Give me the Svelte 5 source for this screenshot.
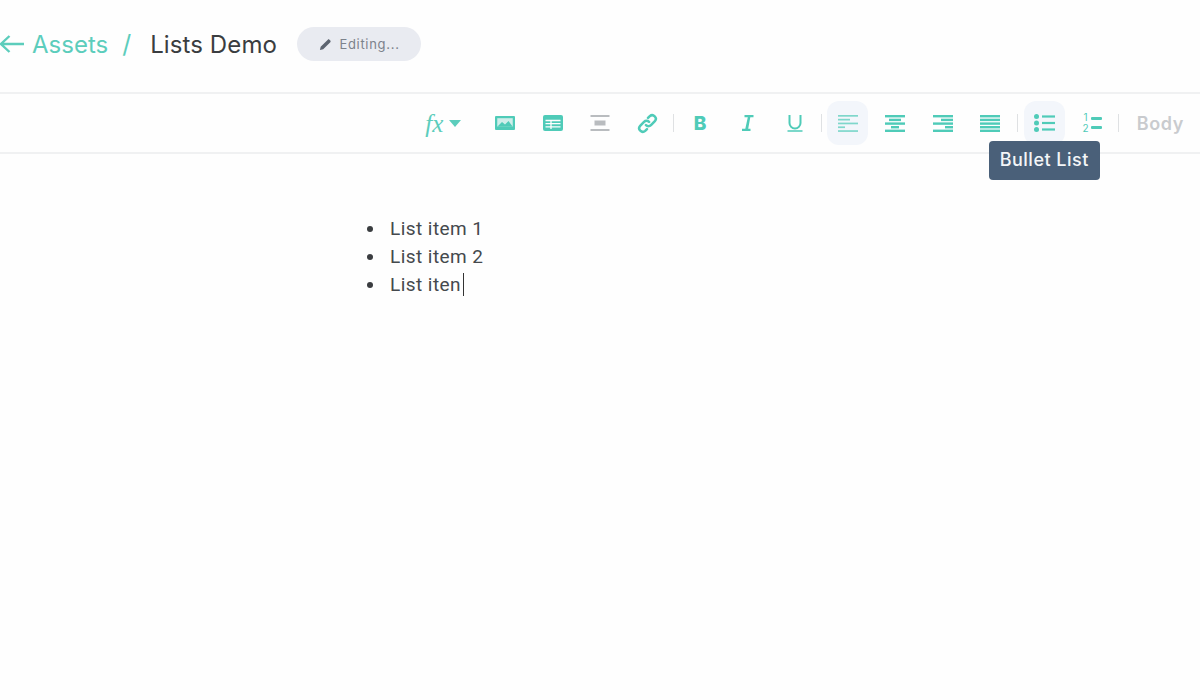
<script>
	const items = ['List item 1', 'List item 2'];
</script>

<div class="page">
	<header class="top">
		<a class="back" href="#assets">
			<svg class="arrow" viewBox="0 0 26 20" width="26" height="20" aria-hidden="true">
				<path d="M25 10H2M10.500 2 2 10l8.500 8" fill="none" stroke="currentColor" stroke-width="2.400" />
			</svg>
			Assets
		</a>
		<span class="slash">/</span>
		<h1>Lists Demo</h1>
		<div class="status">
			<svg viewBox="0 0 14 14" width="13" height="13" aria-hidden="true">
				<path d="M1 13l.8-3.500L9.500 1.800c.5-.5 1.200-.5 1.700 0l1 1c.5.5.5 1.200 0 1.700L4.500 12.200z" fill="#5d6470" />
			</svg>
			<span class="status-label">Editing...</span>
		</div>
	</header>

	<div class="toolbar">
		<button class="tool fx">
			<i>fx</i>
			<svg viewBox="0 0 12 7" width="12" height="7" aria-hidden="true"><path d="M0 0h12L6 7z" fill="currentColor" /></svg>
		</button>

		<button class="tool" aria-label="Image">
			<svg viewBox="0 0 20 14" width="20" height="14">
				<rect width="20" height="14" rx="1" fill="currentColor" />
				<rect width="15.500" height="8.500" x="2.250" y="2.200" fill="#cfeeea" />
				<path d="M2.250 10.700 7 6l3 2.500L13.500 5l4.250 5.700z" fill="currentColor" />
			</svg>
		</button>
		<button class="tool" aria-label="Table">
			<svg viewBox="0 0 20 16" width="20" height="16">
				<rect width="20" height="16" rx="2" fill="currentColor" />
				<path d="M2.500 5.500h15M2.500 8.700h15M2.500 11.900h15M8 5.500v8.500" stroke="#fff" stroke-width="1.300" fill="none" />
			</svg>
		</button>
		<button class="tool" aria-label="Block">
			<svg viewBox="0 0 20 16" width="20" height="16" fill="#b9bcbf">
				<rect width="19" height="2" x="0.500" />
				<rect width="11" height="5" x="4.500" y="5.500" />
				<rect width="19" height="2" x="0.500" y="14" />
			</svg>
		</button>
		<button class="tool" aria-label="Link">
			<svg viewBox="0 0 20 20" width="21" height="21" fill="none" stroke="currentColor" stroke-width="2.400" stroke-linecap="round">
				<path d="M8.500 11.500a3.400 3.400 0 0 0 4.800 0l3.700-3.700a3.400 3.400 0 0 0-4.800-4.800L10.500 4.700" />
				<path d="M11.500 8.500a3.400 3.400 0 0 0-4.800 0L3 12.200A3.400 3.400 0 0 0 7.800 17l1.700-1.700" />
			</svg>
		</button>

		<span class="sep"></span>

		<button class="tool letter">B</button>
		<button class="tool" aria-label="Italic">
			<svg viewBox="0 0 12 16" width="12" height="16" fill="currentColor">
				<path d="M2.500 0h9v2.200H8.300L6.200 13.800h2.300V16h-8.500v-2.200h3.300L5.800 2.200H2.500z" />
			</svg>
		</button>
		<button class="tool" aria-label="Underline">
			<svg viewBox="0 0 16 18" width="16" height="18" fill="none" stroke="currentColor">
				<path d="M2.500 1v8a5.500 5.500 0 0 0 11 0V1" stroke-width="2" />
				<path d="M.5 17h15" stroke-width="1.500" />
			</svg>
		</button>

		<span class="sep"></span>

		<button class="tool active" aria-label="Align left">
			<svg viewBox="0 0 20 17" width="20" height="17" fill="currentColor" opacity="0.7">
				<rect width="20" height="1.700" /><rect width="12" height="1.700" y="3.800" /><rect width="20" height="1.700" y="7.600" /><rect width="7" height="1.700" y="11.400" /><rect width="20" height="1.700" y="15.200" />
			</svg>
		</button>
		<button class="tool" aria-label="Align center">
			<svg viewBox="0 0 20 17" width="20" height="17" fill="currentColor">
				<rect width="20" height="2.400" /><rect width="12" height="2.400" x="4" y="3.700" /><rect width="20" height="2.400" y="7.400" /><rect width="8" height="2.400" x="6" y="11" /><rect width="20" height="2.400" y="14.600" />
			</svg>
		</button>
		<button class="tool" aria-label="Align right">
			<svg viewBox="0 0 20 17" width="20" height="17" fill="currentColor">
				<rect width="20" height="2.400" /><rect width="12" height="2.400" x="8" y="3.700" /><rect width="20" height="2.400" y="7.400" /><rect width="8" height="2.400" x="12" y="11" /><rect width="20" height="2.400" y="14.600" />
			</svg>
		</button>
		<button class="tool" aria-label="Justify">
			<svg viewBox="0 0 20 17" width="20" height="17" fill="currentColor">
				<rect width="20" height="2.400" /><rect width="20" height="2.400" y="3.700" /><rect width="20" height="2.400" y="7.400" /><rect width="20" height="2.400" y="11" /><rect width="20" height="2.400" y="14.600" />
			</svg>
		</button>

		<span class="sep wide"></span>

		<div class="tool-wrap">
			<button class="tool active" aria-label="Bullet List">
				<svg viewBox="0 0 21 18" width="21" height="18" fill="currentColor">
					<circle cx="2.500" cy="2.500" r="2.500" /><circle cx="2.500" cy="9" r="2.500" /><circle cx="2.500" cy="15.500" r="2.500" />
					<rect width="13" height="2.200" x="8" y="1.400" /><rect width="13" height="2.200" x="8" y="7.900" /><rect width="13" height="2.200" x="8" y="14.400" />
				</svg>
			</button>
			<div class="tooltip">Bullet List</div>
		</div>
		<button class="tool numbered" aria-label="Numbered List">
			<span class="nums"><span>1</span><span>2</span></span>
			<svg viewBox="0 0 11 14" width="11" height="14" fill="currentColor">
				<rect width="11" height="3" y="1" rx="1" /><rect width="11" height="3" y="10" rx="1" />
			</svg>
		</button>

		<span class="sep"></span>

		<span class="style-name">Body</span>
	</div>

	<main class="editor">
		<ul>
			{#each items as item}
				<li>{item}</li>
			{/each}
			<li><span>List iten<span class="caret"></span></span></li>
		</ul>
	</main>
</div>

<style>
	:global(body) {
		margin: 0;
		background: #fefefe;
	}

	.page {
		height: 700px;
		overflow: hidden;
		font-family: Inter, 'Liberation Sans', sans-serif;
		color: #3f4347;
	}

	.top {
		display: flex;
		align-items: center;
		height: 94px;
		box-sizing: border-box;
		padding-bottom: 4px;
		border-bottom: 2px solid #f0f1f2;
		font-size: 24px;
	}

	.back {
		display: flex;
		align-items: center;
		gap: 7px;
		color: #5ccdbc;
		text-decoration: none;
	}

	.arrow {
		margin-left: -1px;
	}

	.slash {
		margin: 0 19px 0 14px;
		color: #5ccdbc;
		font-size: 25px;
	}

	h1 {
		margin: 0;
		font-size: 24px;
		font-weight: 400;
		letter-spacing: 0.1px;
		color: #3a3d40;
	}

	.status {
		display: flex;
		align-items: center;
		justify-content: center;
		gap: 7px;
		width: 124px;
		height: 34px;
		margin-left: 20px;
		border-radius: 17px;
		background: #e9ebf1;
		color: #7c828c;
		font-size: 13px;
		letter-spacing: 0.7px;
	}

	.status-label {
		margin-right: -1px;
	}

	.toolbar {
		display: flex;
		justify-content: flex-end;
		align-items: center;
		height: 60px;
		box-sizing: border-box;
		padding-right: 16px;
		border-bottom: 2px solid #f0f1f2;
	}

	.tool-wrap {
		position: relative;
	}

	.tool {
		display: flex;
		align-items: center;
		justify-content: center;
		width: 47.500px;
		height: 44px;
		padding: 0;
		border: 0;
		background: none;
		color: #4fcbb8;
		font-family: inherit;
		position: relative;
		z-index: 0;
	}

	.tool.active::before {
		content: '';
		position: absolute;
		inset: 0 3px;
		border-radius: 12px;
		background: #f3f6fb;
		z-index: -1;
	}

	.fx {
		width: 76px;
		gap: 6px;
		color: #5ccdbc;
	}

	.fx i {
		font-family: 'Liberation Serif', serif;
		font-size: 25px;
		line-height: 1;
	}

	.letter {
		font-size: 19px;
		font-weight: 800;
	}

	.numbered {
		gap: 2px;
	}

	.nums {
		display: flex;
		flex-direction: column;
		font-size: 10px;
		line-height: 11px;
	}

	.sep {
		width: 1px;
		height: 18px;
		margin: 0 2px;
		background: #dfe1e3;
	}

	.sep.wide {
		margin: 0 3px;
	}

	.style-name {
		margin-left: 16px;
		font-size: 18px;
		font-weight: 600;
		letter-spacing: 0.6px;
		color: #c9cbce;
	}

	.tooltip {
		position: absolute;
		top: 40px;
		left: -32px;
		z-index: 2;
		width: 111px;
		height: 39px;
		box-sizing: border-box;
		padding-bottom: 2px;
		display: flex;
		align-items: center;
		justify-content: center;
		border-radius: 4px;
		background: #4a6079;
		color: #f3f5f7;
		font-size: 18px;
		font-weight: 500;
		letter-spacing: 0.5px;
		white-space: nowrap;
	}

	.editor {
		padding: 61px 0 0 367px;
		font-family: Roboto, sans-serif;
		font-size: 19px;
		line-height: 28px;
		letter-spacing: 0.45px;
		color: #45494d;
	}

	ul {
		margin: 0;
		padding: 0;
		list-style: none;
	}

	li {
		display: flex;
		align-items: center;
		gap: 17px;
	}

	li::before {
		content: '';
		width: 6px;
		height: 6px;
		border-radius: 50%;
		background: #3a3d40;
	}

	.caret {
		display: inline-block;
		width: 1px;
		height: 23px;
		margin-left: 2px;
		vertical-align: -5px;
		background: #333;
	}
</style>
